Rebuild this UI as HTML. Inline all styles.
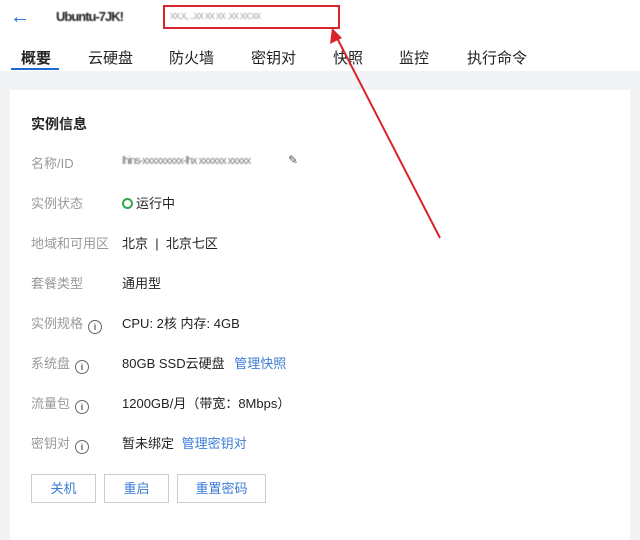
<!DOCTYPE html><html><head><meta charset="utf-8"><style>
body{margin:0;width:640px;height:530px;overflow:hidden;background:#f2f3f5;font-family:"Liberation Sans","Noto Sans CJK SC",sans-serif;position:relative}
.top{position:absolute;left:0;top:0;width:640px;height:71px;background:#fff}
.tab{position:absolute;top:47px;font-size:15px;color:#222}
.card{position:absolute;left:10px;top:90px;width:620px;height:450px;background:#fff}
.lab{position:absolute;left:31px;font-size:13px;color:#999}
.val{position:absolute;left:122px;font-size:13px;color:#222}
.btn{position:absolute;top:474px;height:29px;border:1px solid #ccc;box-sizing:border-box;font-size:13px;color:#3b7bd6;text-align:center;line-height:27px;background:#fff}
.i{display:inline-block;width:12px;height:12px;border:1.3px solid #666;border-radius:50%;font-size:9px;line-height:12px;text-align:center;color:#666;margin-left:5px;vertical-align:-2px;font-weight:bold}
.blur{color:#bbb;letter-spacing:-1px;filter:blur(0.6px)}
a{color:#3b7bd6}
</style></head><body>
<div class="top"></div>
<div style="position:absolute;left:10px;top:6px;font-size:20px;color:#1a6ad6">←</div>
<div class="blur" style="position:absolute;left:56px;top:9px;font-size:13px;color:#222;font-weight:bold">Ubuntu-7JK!</div>
<div style="position:absolute;left:163px;top:5px;width:177px;height:24px;border:2px solid #d9242c;box-sizing:border-box"></div>
<div class="blur" style="position:absolute;left:170px;top:10px;font-size:11px;color:#aaa">xx.x, ..xx xx xx .xx xx:xx</div>
<div class="tab" style="left:21px;font-weight:bold">概要</div>
<div style="position:absolute;left:11px;top:68px;width:48px;height:2px;background:#1a6ad6"></div>
<div class="tab" style="left:88px">云硬盘</div>
<div class="tab" style="left:169px">防火墙</div>
<div class="tab" style="left:251px">密钥对</div>
<div class="tab" style="left:333px">快照</div>
<div class="tab" style="left:399px">监控</div>
<div class="tab" style="left:467px">执行命令</div>
<div class="card"></div>
<div style="position:absolute;left:31px;top:114px;font-size:14px;font-weight:bold;color:#222">实例信息</div>
<div class="lab" style="top:153px">名称/ID</div><div class="val blur" style="top:155px;font-size:11px;color:#777">lhins-xxxxxxxxx-lhx xxxxxx xxxxx</div><div style="position:absolute;left:288px;top:153px;font-size:12px;color:#555">✎</div>
<div class="lab" style="top:193px">实例状态</div><div class="val" style="top:193px"><span style="display:inline-block;width:7px;height:7px;border:2px solid #2fa84f;border-radius:50%;vertical-align:-1px;margin-right:3px"></span>运行中</div>
<div class="lab" style="top:233px">地域和可用区</div><div class="val" style="top:233px">北京 &nbsp;| &nbsp;北京七区</div>
<div class="lab" style="top:273px">套餐类型</div><div class="val" style="top:273px">通用型</div>
<div class="lab" style="top:313px">实例规格<span class="i">i</span></div><div class="val" style="top:313px">CPU: 2核 内存: 4GB</div>
<div class="lab" style="top:353px">系统盘<span class="i">i</span></div><div class="val" style="top:353px">80GB SSD云硬盘 <a style="margin-left:6px">管理快照</a></div>
<div class="lab" style="top:393px">流量包<span class="i">i</span></div><div class="val" style="top:393px">1200GB/月（带宽：8Mbps）</div>
<div class="lab" style="top:433px">密钥对<span class="i">i</span></div><div class="val" style="top:433px">暂未绑定 <a style="margin-left:4px">管理密钥对</a></div>
<div class="btn" style="left:31px;width:65px">关机</div>
<div class="btn" style="left:104px;width:65px">重启</div>
<div class="btn" style="left:177px;width:89px">重置密码</div>
<svg style="position:absolute;left:0;top:0" width="640" height="530"><line x1="440" y1="238" x2="336" y2="36" stroke="#d9242c" stroke-width="2"/><polygon points="332,28 330,44 342,38" fill="#d9242c"/></svg>
</body></html>
